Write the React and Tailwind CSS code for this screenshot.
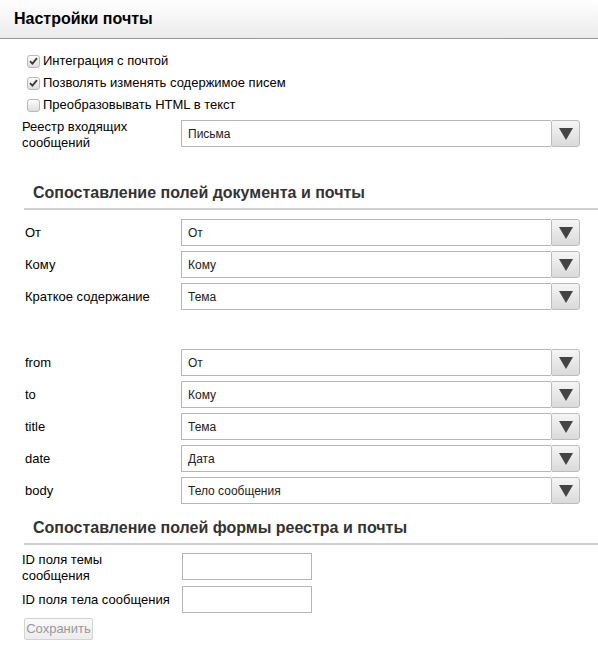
import React from "react";

function Check({ checked }) {
  return (
    <span className="w-[13px] h-[13px] rounded-[3px] border border-[#b9b9b9] bg-gradient-to-b from-[#fdfdfd] to-[#dedede] flex items-center justify-center shrink-0">
      {checked && (
        <svg width="9" height="8" viewBox="0 0 9 8">
          <path d="M1 4.2 L3.4 6.6 L8 1.2" fill="none" stroke="#3a3a3a" strokeWidth="1.8" />
        </svg>
      )}
    </span>
  );
}

function Select({ value }) {
  return (
    <div className="flex h-[27px] w-[399px] shrink-0">
      <div className="flex-1 border border-[#b5b5b5] border-r-0 bg-white flex items-center pl-[6px] text-[12px] text-[#222]">
        {value}
      </div>
      <div className="w-[29px] h-[27px] border border-[#bcbcbc] rounded-r-[3px] rounded-l-[2px] bg-gradient-to-b from-[#f6f6f6] to-[#dadada] flex items-center justify-center">
        <svg width="14" height="12" viewBox="0 0 14 12">
          <path d="M0 0 L14 0 L7 12 Z" fill="#444" />
        </svg>
      </div>
    </div>
  );
}

function Row({ label, value }) {
  return (
    <div className="flex items-center h-[27px]">
      <div className="w-[181px] pl-[25px] text-[13px] text-black">{label}</div>
      <Select value={value} />
    </div>
  );
}

function Heading({ children, mt }) {
  return (
    <div className={`ml-[24px] border-b-2 border-[#d0d0d0] pb-[5px] ${mt}`}>
      <div className="pl-[9px] h-[20px] leading-[20px] text-[16px] font-bold text-[#333]">{children}</div>
    </div>
  );
}

export default function App() {
  return (
    <div className="w-[598px] h-[652px] bg-white font-['Liberation_Sans',Arial,sans-serif] text-black overflow-hidden">
      <div className="h-[39px] border-b border-[#9a9a9a] bg-gradient-to-b from-white to-[#ebebeb] flex items-center pl-[14px] text-[16px] font-bold">
        Настройки почты
      </div>

      <div className="mt-[11px] pl-[27px] text-[13px]">
        <div className="h-[22px] flex items-center gap-[3px]">
          <Check checked />
          <span>Интеграция с почтой</span>
        </div>
        <div className="h-[22px] flex items-center gap-[3px]">
          <Check checked />
          <span>Позволять изменять содержимое писем</span>
        </div>
        <div className="h-[22px] flex items-center gap-[3px]">
          <Check />
          <span>Преобразовывать HTML в текст</span>
        </div>
      </div>

      <div className="mt-[4px] flex items-start">
        <div className="w-[181px] pl-[22px] text-[13px] leading-[16px] -mt-px">
          Реестр входящих
          <br />
          сообщений
        </div>
        <Select value="Письма" />
      </div>

      <Heading mt="mt-[32px]">Сопоставление полей документа и почты</Heading>

      <div className="mt-[9px] flex flex-col gap-[5px]">
        <Row label="От" value="От" />
        <Row label="Кому" value="Кому" />
        <Row label="Краткое содержание" value="Тема" />
      </div>

      <div className="mt-[39px] flex flex-col gap-[5px]">
        <Row label="from" value="От" />
        <Row label="to" value="Кому" />
        <Row label="title" value="Тема" />
        <Row label="date" value="Дата" />
        <Row label="body" value="Тело сообщения" />
      </div>

      <Heading mt="mt-[14px]">Сопоставление полей формы реестра и почты</Heading>

      <div className="mt-[7px] flex items-start">
        <div className="w-[182px] pl-[22px] text-[13px] leading-[16px]">
          ID поля темы
          <br />
          сообщения
        </div>
        <div className="mt-px w-[130px] h-[27px] border border-[#b5b5b5] bg-white" />
      </div>
      <div className="mt-[2px] flex items-center">
        <div className="w-[182px] pl-[22px] text-[13px]">ID поля тела сообщения</div>
        <div className="w-[130px] h-[27px] border border-[#b5b5b5] bg-white" />
      </div>

      <div className="mt-[5px] pl-[24px]">
        <button className="w-[69px] h-[22px] border border-[#d3d3d3] rounded-[2px] bg-gradient-to-b from-[#fafafa] to-[#ececec] text-[13px] text-[#999] flex items-center justify-center">
          Сохранить
        </button>
      </div>
    </div>
  );
}
